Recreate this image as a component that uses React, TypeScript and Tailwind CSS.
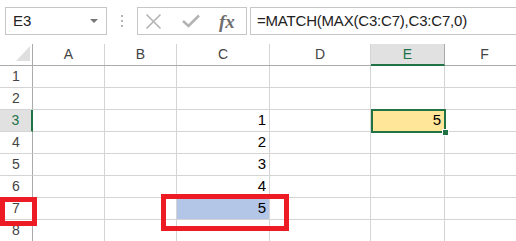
import React from 'react';

const columns = [
  { name: 'A', width: 72 },
  { name: 'B', width: 72 },
  { name: 'C', width: 93 },
  { name: 'D', width: 101 },
  { name: 'E', width: 74 },
  { name: 'F', width: 80 },
];

const rows = [1, 2, 3, 4, 5, 6, 7, 8];

const values: Record<string, string> = {
  C3: '1',
  C4: '2',
  C5: '3',
  C6: '4',
  C7: '5',
  E3: '5',
};

const App = () => {
  return (
    <div className="relative w-[516px] h-[241px] overflow-hidden bg-white" style={{ fontFamily: '"Liberation Sans", Arial, sans-serif' }}>
      {/* formula bar */}
      <div className="flex h-[44px] items-start pt-[7px]">
        <div className="ml-[5px] w-[102px] h-[28px] border border-[#c6c6c6] flex items-center justify-between pl-[7px] pr-[8px]">
          <span className="text-[15px] text-[#222]">E3</span>
          <span className="w-0 h-0 border-l-[4px] border-r-[4px] border-t-[4px] border-l-transparent border-r-transparent border-t-[#777]" />
        </div>
        <div className="w-[30px] h-[28px] flex flex-col items-center justify-center gap-[3px]">
          <span className="w-[2px] h-[2px] bg-[#b5b5b5]" />
          <span className="w-[2px] h-[2px] bg-[#b5b5b5]" />
          <span className="w-[2px] h-[2px] bg-[#b5b5b5]" />
        </div>
        <div className="w-[110px] h-[28px] border border-[#c6c6c6] flex items-center">
          <svg className="ml-[7px]" width="17" height="17" viewBox="0 0 17 17">
            <path d="M1.5 1.5 L15.5 15.5 M15.5 1.5 L1.5 15.5" stroke="#b4b4b4" strokeWidth="1.6" fill="none" />
          </svg>
          <svg className="ml-[20px]" width="18" height="14" viewBox="0 0 18 14">
            <path d="M1 7 L6.5 12 L17 1.5" stroke="#b4b4b4" strokeWidth="2.6" fill="none" />
          </svg>
          <span className="ml-[19px] text-[19px] italic font-bold text-[#6e6e6e] leading-none" style={{ fontFamily: '"Liberation Serif", "Times New Roman", serif' }}>
            fx
          </span>
        </div>
        <div className="ml-[3px] flex-1 h-[28px] border border-r-0 border-[#c6c6c6] flex items-center pl-[6px]">
          <span className="text-[15px] text-[#222] tracking-[-0.2px]">=MATCH(MAX(C3:C7),C3:C7,0)</span>
        </div>
      </div>

      {/* grid */}
      <div className="flex flex-col">
        <div className="flex h-[22px] border-b border-[#ababab]">
          <div className="w-[33px] shrink-0 border-r border-[#ababab] relative">
            <svg className="absolute left-[16px] top-[2px]" width="14" height="15" viewBox="0 0 14 15">
              <path d="M14 0 L14 15 L0 15 Z" fill="#dfdfdf" />
            </svg>
          </div>
          {columns.map((col) => (
            <div
              key={col.name}
              style={{ width: col.width }}
              className={`shrink-0 flex items-center justify-center text-[14px] border-r ${
                col.name === 'E'
                  ? 'bg-[#e1e1e1] text-[#217346] border-[#ababab] border-b-2 border-b-[#217346] -mb-[1px]'
                  : 'text-[#444] border-[#d4d4d4]'
              }`}
            >
              {col.name}
            </div>
          ))}
        </div>
        {rows.map((r) => (
          <div key={r} className="flex h-[22px]">
            <div
              className={`w-[33px] shrink-0 flex items-center justify-center text-[14px] border-b border-[#d4d4d4] ${
                r === 3
                  ? 'bg-[#e1e1e1] text-[#217346] border-r-2 border-r-[#217346]'
                  : 'text-[#444] border-r border-r-[#ababab]'
              }`}
            >
              {r}
            </div>
            {columns.map((col) => {
              const key = `${col.name}${r}`;
              const v = values[key];
              let bg = '';
              if (key === 'E3') bg = 'bg-[#ffe699]';
              if (key === 'C7') bg = 'bg-[#b4c6e7]';
              return (
                <div
                  key={key}
                  style={{ width: col.width }}
                  className={`shrink-0 flex items-center justify-end pr-[3px] text-[15px] text-black border-r border-b border-[#d4d4d4] ${bg}`}
                >
                  {v}
                </div>
              );
            })}
          </div>
        ))}
      </div>

      {/* active cell E3 */}
      <div className="absolute left-[371px] top-[109px] w-[75px] h-[24px] border-2 border-[#217346]" />
      <div className="absolute left-[442px] top-[129px] w-[7px] h-[7px] bg-[#217346] border border-white" />

      {/* red highlight boxes */}
      <div className="absolute left-0 top-[197px] w-[37px] h-[29px] border-[5px] border-[#ed1c24]" />
      <div className="absolute left-[161px] top-[194px] w-[128px] h-[37px] border-[5px] border-[#ed1c24]" />
    </div>
  );
};

export default App;
